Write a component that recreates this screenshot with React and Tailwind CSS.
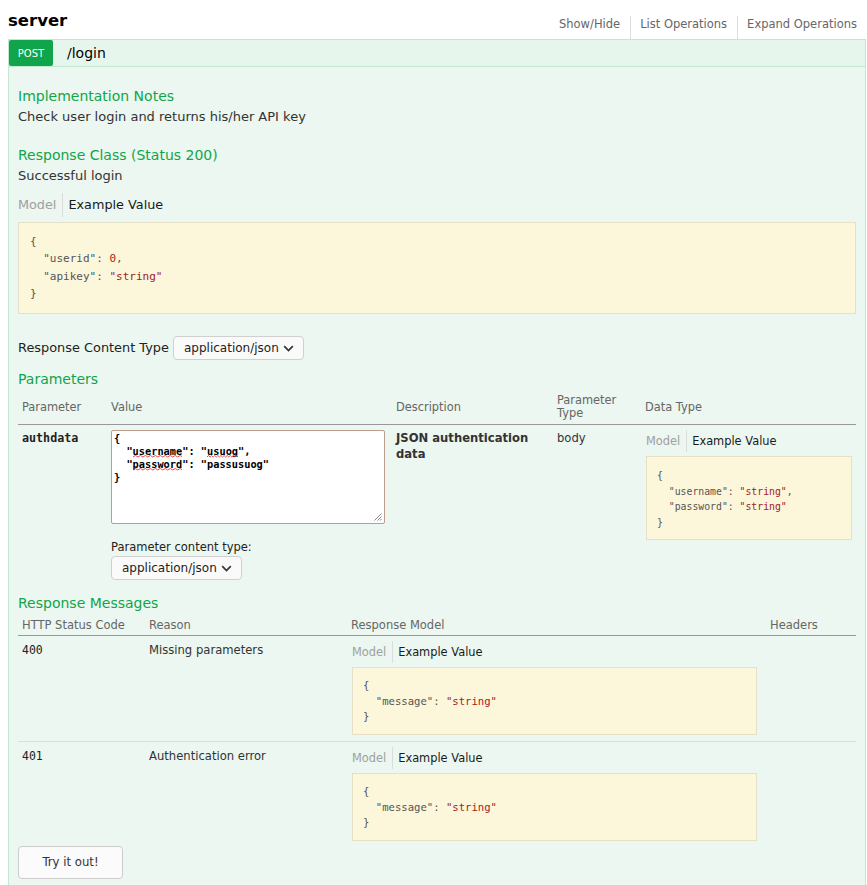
import React from "react";

function ModelTabs({ className }) {
  return (
    <div className={"flex " + className}>
      <span className="pr-[6px] text-[#a0a0a0]">Model</span>
      <span className="pl-[5px] border-l border-[#dcdcdc] text-[#1a1a1a]">Example Value</span>
    </div>
  );
}

function CodeBox({ className, entries }) {
  return (
    <div
      className={
        "border border-[#e5e0c6] bg-[#fcf6db] font-['DejaVu_Sans_Mono',monospace] whitespace-pre text-[#555] " +
        className
      }
    >
      <div>{"{"}</div>
      {entries.map(([k, v], i) => (
        <div key={i}>
          {`  "${k}": `}
          <span className="text-[#a31b1b]">{v}</span>
          {i < entries.length - 1 ? "," : ""}
        </div>
      ))}
      <div>{"}"}</div>
    </div>
  );
}

function Select({ className }) {
  return (
    <div
      className={
        "inline-flex items-center h-[24px] pl-[10px] pr-[9px] border border-[#d0d0d0] rounded-[4px] bg-[#fafafa] text-[12px] text-[#222] " +
        className
      }
    >
      <span>application/json</span>
      <svg width="11" height="7" viewBox="0 0 11 7" className="ml-[4px]">
        <path d="M1.2 1.2l4.3 4.3 4.3-4.3" fill="none" stroke="#333" strokeWidth="1.7" />
      </svg>
    </div>
  );
}

function Squig({ children }) {
  return (
    <span className="relative inline-block">
      {children}
      <svg
        className="absolute left-0 top-[10px] w-full h-[3px]"
        viewBox="0 0 40 3"
        preserveAspectRatio="none"
      >
        <path
          d="M0 2 L2 0.5 L4 2 L6 0.5 L8 2 L10 0.5 L12 2 L14 0.5 L16 2 L18 0.5 L20 2 L22 0.5 L24 2 L26 0.5 L28 2 L30 0.5 L32 2 L34 0.5 L36 2 L38 0.5 L40 2"
          fill="none"
          stroke="#e53935"
          strokeWidth="0.9"
          vectorEffect="non-scaling-stroke"
        />
      </svg>
    </span>
  );
}

export default function App() {
  return (
    <div className="min-h-[885px] bg-white font-['DejaVu_Sans',sans-serif] text-[#333]">
      <div className="pl-[8px] w-[866px]">
        {/* top heading row */}
        <div className="flex justify-between h-[39px]">
          <h2 className="pt-[11px] text-[16.5px] leading-[20px] font-bold text-black">server</h2>
          <div className="flex pt-[16px] text-[11.5px] leading-[17px] text-[#666]">
            <span className="pr-[10px]">Show/Hide</span>
            <span className="pl-[9px] pr-[10px] border-l border-[#ddd]">List Operations</span>
            <span className="pl-[9px] pr-[9px] border-l border-[#ddd]">Expand Operations</span>
          </div>
        </div>

        {/* operation heading */}
        <div className="flex items-center h-[28px] border border-[#c3e8d1] bg-[#e7f6ec]">
          <div className="flex items-center justify-center w-[44px] h-full bg-[#10a54a] text-white text-[10px] rounded-[2px]">
            POST
          </div>
          <span className="ml-[14px] text-[14px] text-black">/login</span>
        </div>

        {/* content */}
        <div className="border-x border-b border-[#c3e8d1] bg-[#ebf7f0] px-[9px] pb-[30px]">
          <h4 className="pt-[21px] text-[14px] leading-[17px] text-[#10a54a]">Implementation Notes</h4>
          <p className="mt-[4px] text-[13px] leading-[16px] text-[#333]">
            Check user login and returns his/her API key
          </p>

          <h4 className="mt-[22px] text-[14px] leading-[17px] text-[#10a54a]">Response Class (Status 200)</h4>
          <p className="mt-[4px] text-[13px] leading-[16px] text-[#333]">Successful login</p>

          <ModelTabs className="mt-[9px] text-[12.8px] leading-[24px]" />
          <CodeBox
            className="mt-[5px] h-[92px] pt-[10px] pl-[11px] text-[11px] leading-[17.4px]"
            entries={[
              ["userid", "0"],
              ["apikey", '"string"'],
            ]}
          />

          <div className="mt-[22px] flex items-center h-[24px]">
            <span className="text-[12.9px] text-[#222]">Response Content Type</span>
            <Select className="ml-[4px]" />
          </div>

          <h4 className="mt-[11px] text-[14px] leading-[17px] text-[#10a54a]">Parameters</h4>

          <table className="w-full table-fixed border-collapse">
            <colgroup>
              <col className="w-[89px]" />
              <col className="w-[285px]" />
              <col className="w-[161px]" />
              <col className="w-[88px]" />
              <col className="w-[215px]" />
            </colgroup>
            <thead>
              <tr className="text-left text-[11.4px] leading-[13px] text-[#666]">
                <th className="font-normal px-[4px] pt-[6px] pb-[4px] border-b border-[#999] align-middle">Parameter</th>
                <th className="font-normal px-[4px] pt-[6px] pb-[4px] border-b border-[#999] align-middle">Value</th>
                <th className="font-normal px-[4px] pt-[6px] pb-[4px] border-b border-[#999] align-middle">Description</th>
                <th className="font-normal px-[4px] pt-[6px] pb-[4px] border-b border-[#999] align-middle">Parameter Type</th>
                <th className="font-normal px-[4px] pt-[6px] pb-[4px] border-b border-[#999] align-middle">Data Type</th>
              </tr>
            </thead>
            <tbody>
              <tr>
                <td className="align-top px-[4px] pt-[5px] font-['DejaVu_Sans_Mono',monospace] font-bold text-[11.7px] leading-[16px] text-[#222]">
                  authdata
                </td>
                <td className="align-top px-[4px] pt-[5px]">
                  <div className="relative w-[274px] h-[94px] border border-[#bd9d8e] rounded-[2px] bg-white pt-[1px] pl-[2px] font-['DejaVu_Sans_Mono',monospace] font-bold text-[10.3px] leading-[13px] text-black whitespace-pre">
                    <div>{"{"}</div>
                    <div>
                      {'  "'}
                      <Squig>username</Squig>
                      {'": "'}
                      <Squig>usuog</Squig>
                      {'",'}
                    </div>
                    <div>
                      {'  "'}
                      <Squig>password</Squig>
                      {'": "passusuog"'}
                    </div>
                    <div>{"}"}</div>
                    <svg width="9" height="9" viewBox="0 0 9 9" className="absolute right-[2px] bottom-[2px]">
                      <path d="M8.5 1.5L1.5 8.5M8.5 4.5L4.5 8.5M8.5 7L7 8.5" stroke="#888" strokeWidth="1" />
                    </svg>
                  </div>
                  <div className="mt-[15px] text-[11.5px] leading-[16px] text-[#222]">Parameter content type:</div>
                  <div>
                    <Select className="" />
                  </div>
                </td>
                <td className="align-top px-[4px] pt-[5px] font-bold text-[11.6px] leading-[16px] text-[#333]">
                  JSON authentication data
                </td>
                <td className="align-top px-[4px] pt-[5px] text-[11.6px] leading-[16px] text-[#333]">body</td>
                <td className="align-top px-[4px] pt-[5px]">
                  <ModelTabs className="ml-[1px] text-[11.4px] leading-[22px]" />
                  <CodeBox
                    className="mt-[4px] ml-[1px] h-[84px] pt-[11px] pl-[10px] text-[9.8px] leading-[15.5px]"
                    entries={[
                      ["username", '"string"'],
                      ["password", '"string"'],
                    ]}
                  />
                </td>
              </tr>
            </tbody>
          </table>

          <h4 className="mt-[15px] text-[14px] leading-[17px] text-[#10a54a]">Response Messages</h4>

          <table className="w-full table-fixed border-collapse">
            <colgroup>
              <col className="w-[127px]" />
              <col className="w-[202px]" />
              <col className="w-[417px]" />
              <col className="w-[92px]" />
            </colgroup>
            <thead>
              <tr className="text-left text-[11.5px] leading-[13px] text-[#666]">
                <th className="font-normal px-[4px] pt-[7px] pb-[3px] border-b border-[#999]">HTTP Status Code</th>
                <th className="font-normal px-[4px] pt-[7px] pb-[3px] border-b border-[#999]">Reason</th>
                <th className="font-normal px-[4px] pt-[7px] pb-[3px] border-b border-[#999]">Response Model</th>
                <th className="font-normal pl-[6px] pr-[2px] pt-[7px] pb-[3px] border-b border-[#999]">Headers</th>
              </tr>
            </thead>
            <tbody>
              {[
                ["400", "Missing parameters", true],
                ["401", "Authentication error", false],
              ].map(([code, reason, sep]) => (
                <tr key={code}>
                  <td
                    className={
                      "align-top px-[4px] pt-[6px] font-['DejaVu_Sans_Mono',monospace] text-[11.5px] leading-[16px] text-[#222] " +
                      (sep ? "pb-[6px] border-b border-[#dddddd]" : "pb-[5px]")
                    }
                  >
                    {code}
                  </td>
                  <td
                    className={
                      "align-top px-[4px] pt-[6px] text-[11.6px] leading-[16px] text-[#333] " +
                      (sep ? "pb-[6px] border-b border-[#dddddd]" : "pb-[5px]")
                    }
                  >
                    {reason}
                  </td>
                  <td
                    className={
                      "align-top px-[4px] pt-[5px] " + (sep ? "pb-[6px] border-b border-[#dddddd]" : "pb-[5px]")
                    }
                  >
                    <ModelTabs className="ml-[1px] text-[11.4px] leading-[22px]" />
                    <CodeBox
                      className="mt-[4px] ml-[1px] w-[405px] h-[68px] pt-[10px] pl-[10px] text-[10.6px] leading-[15.7px]"
                      entries={[["message", '"string"']]}
                    />
                  </td>
                  <td
                    className={"align-top px-[4px] pt-[5px] " + (sep ? "pb-[6px] border-b border-[#dddddd]" : "pb-[5px]")}
                  ></td>
                </tr>
              ))}
            </tbody>
          </table>

          <button className="block w-[105px] h-[33px] border border-[#cccccc] rounded-[4px] bg-[#fbfbfb] text-[11.7px] text-[#333]">
            Try it out!
          </button>
        </div>
      </div>
    </div>
  );
}
